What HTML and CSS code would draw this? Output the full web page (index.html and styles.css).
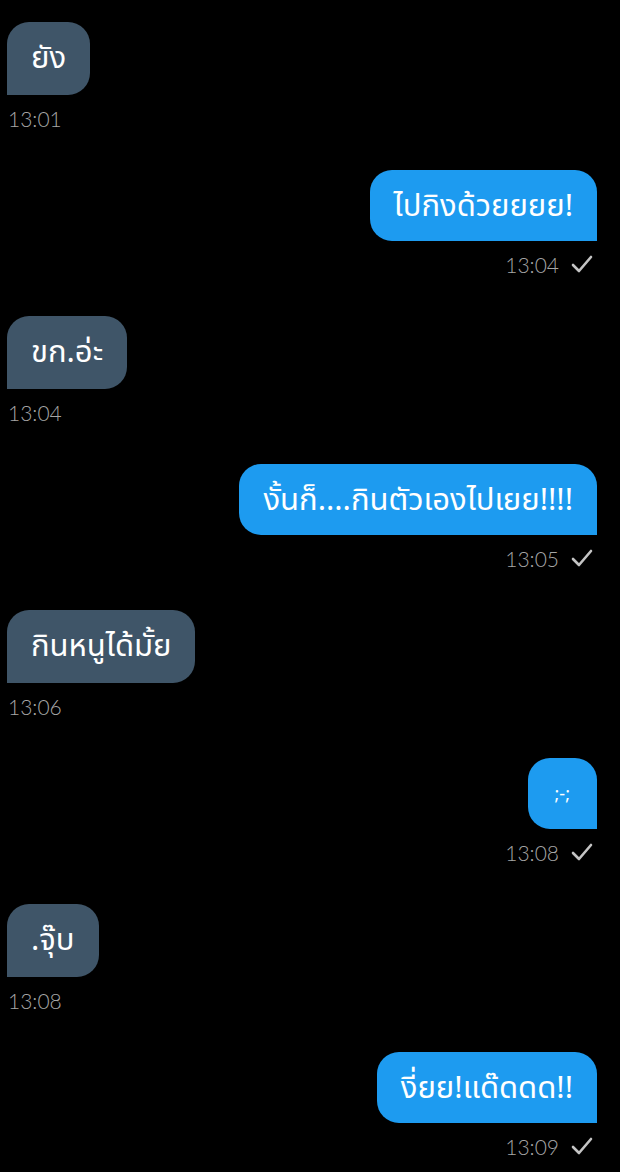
FILE: index.html
```html
<!DOCTYPE html>
<html lang="th">
<head>
  <meta charset="UTF-8" />
  <title>แชท</title>
  <link rel="stylesheet" href="styles.css">
</head>
<body>

<div class="chat">

  <div class="msg in">
    <div class="bubble">ยัง</div>
    <div class="meta"><span class="time">13:01</span></div>
  </div>

  <div class="msg out">
    <div class="bubble">ไปกิงด้วยยยย!</div>
    <div class="meta"><span class="time">13:04</span>
      <svg class="tick" viewBox="0 0 22 18"><polyline points="2,10 8,16 20,2" /></svg>
    </div>
  </div>

  <div class="msg in">
    <div class="bubble">ขก.อ่ะ</div>
    <div class="meta"><span class="time">13:04</span></div>
  </div>

  <div class="msg out">
    <div class="bubble">งั้นก็....กินตัวเองไปเยย!!!!</div>
    <div class="meta"><span class="time">13:05</span>
      <svg class="tick" viewBox="0 0 22 18"><polyline points="2,10 8,16 20,2" /></svg>
    </div>
  </div>

  <div class="msg in">
    <div class="bubble">กินหนูได้มั้ย</div>
    <div class="meta"><span class="time">13:06</span></div>
  </div>

  <div class="msg out">
    <div class="bubble small">;-;</div>
    <div class="meta"><span class="time">13:08</span>
      <svg class="tick" viewBox="0 0 22 18"><polyline points="2,10 8,16 20,2" /></svg>
    </div>
  </div>

  <div class="msg in">
    <div class="bubble">.จุ๊บ</div>
    <div class="meta"><span class="time">13:08</span></div>
  </div>

  <div class="msg out">
    <div class="bubble">งี่ยย!แด๊ดดด!!</div>
    <div class="meta"><span class="time">13:09</span>
      <svg class="tick" viewBox="0 0 22 18"><polyline points="2,10 8,16 20,2" /></svg>
    </div>
  </div>

</div>

</body>
</html>
```

FILE: styles.css
```css
body {
  margin: 0;
  background: #000;
  font-family: "Noto Sans Thai", "Noto Sans", "DejaVu Sans", sans-serif;
}
.chat {
  padding: 22px 23px 0 7px;
  display: flex;
  flex-direction: column;
}
.msg {
  display: flex;
  flex-direction: column;
  margin-bottom: 37px;
}
.msg.in {
  align-items: flex-start;
}
.msg.out {
  align-items: flex-end;
}
.bubble {
  color: #fff;
  font-size: 31px;
  line-height: 37px;
  padding: 18px 24px;
  border-radius: 22px;
  white-space: nowrap;
}
.in .bubble {
  background: #3f5568;
  border-bottom-left-radius: 0;
}
.out .bubble {
  background: #1d9bf0;
  border-bottom-right-radius: 0;
  padding-bottom: 16px;
}
.bubble.small {
  font-size: 18px;
  padding-left: 27px;
  padding-right: 27px;
}
.meta {
  margin-top: 8px;
  height: 30px;
  display: flex;
  align-items: center;
  gap: 12px;
}
.in .meta {
  padding-left: 1px;
}
.out .meta {
  padding-right: 4px;
}
.time {
  font-family: "Lato", "Liberation Sans", sans-serif;
  font-weight: 300;
  font-size: 21px;
  color: #a6a6a6;
}
.tick {
  width: 22px;
  height: 18px;
  fill: none;
  stroke: #c4c4c4;
  stroke-width: 2.6;
  stroke-linecap: round;
  stroke-linejoin: round;
}
```
